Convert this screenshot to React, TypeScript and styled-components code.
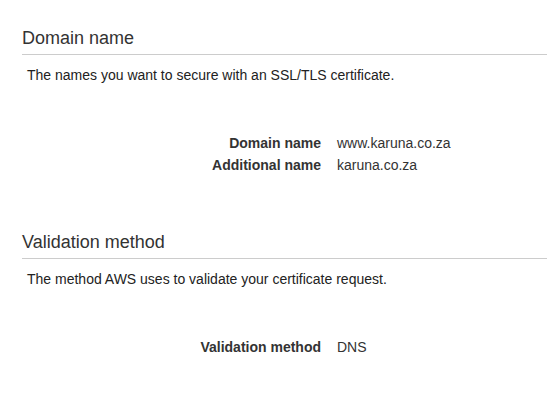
import React from "react";
import styled, {createGlobalStyle} from "styled-components";

type Row = {
    label: string
    value: string
}

type SectionProps = {
    title: string
    description: string
    rows: Row[]
}

const GlobalStyle = createGlobalStyle`
  body {
    margin: 0;
    background: #ffffff;
    font-family: "Liberation Sans", Arial, sans-serif;
    color: #222222;
  }
`

function Section(props: SectionProps) {
    return <StyledSection>
        <StyledHeading>{props.title}</StyledHeading>
        <StyledDescription>{props.description}</StyledDescription>
        <StyledList>
            {props.rows.map(row =>
                <React.Fragment key={row.label}>
                    <StyledLabel>{row.label}</StyledLabel>
                    <StyledValue>{row.value}</StyledValue>
                </React.Fragment>
            )}
        </StyledList>
    </StyledSection>
}

export default function App() {
    return <>
        <GlobalStyle/>
        <StyledPage>
            <Section title="Domain name"
                     description="The names you want to secure with an SSL/TLS certificate."
                     rows={[
                         {label: "Domain name", value: "www.karuna.co.za"},
                         {label: "Additional name", value: "karuna.co.za"},
                     ]}/>
            <Section title="Validation method"
                     description="The method AWS uses to validate your certificate request."
                     rows={[
                         {label: "Validation method", value: "DNS"},
                     ]}/>
        </StyledPage>
    </>
}

const StyledPage = styled.main`
  padding: 28px 0 0 22px;
  display: flex;
  flex-direction: column;
  gap: 59px;
`

const StyledSection = styled.section`
  display: flex;
  flex-direction: column;
`

const StyledHeading = styled.h2`
  margin: 0;
  padding-bottom: 6px;
  font-size: 18px;
  font-weight: 400;
  line-height: 20px;
  color: #333333;
  border-bottom: 1px solid #cccccc;
`

const StyledDescription = styled.p`
  margin: 12px 0 0 5px;
  font-size: 14px;
  line-height: 16px;
  color: #222222;
`

const StyledList = styled.dl`
  margin: 52px 0 0 0;
  display: grid;
  grid-template-columns: 299px 1fr;
  column-gap: 16px;
  row-gap: 6px;
  font-size: 14px;
  line-height: 16px;
`

const StyledLabel = styled.dt`
  text-align: right;
  font-weight: 700;
  color: #333333;
`

const StyledValue = styled.dd`
  margin: 0;
  color: #333333;
`
